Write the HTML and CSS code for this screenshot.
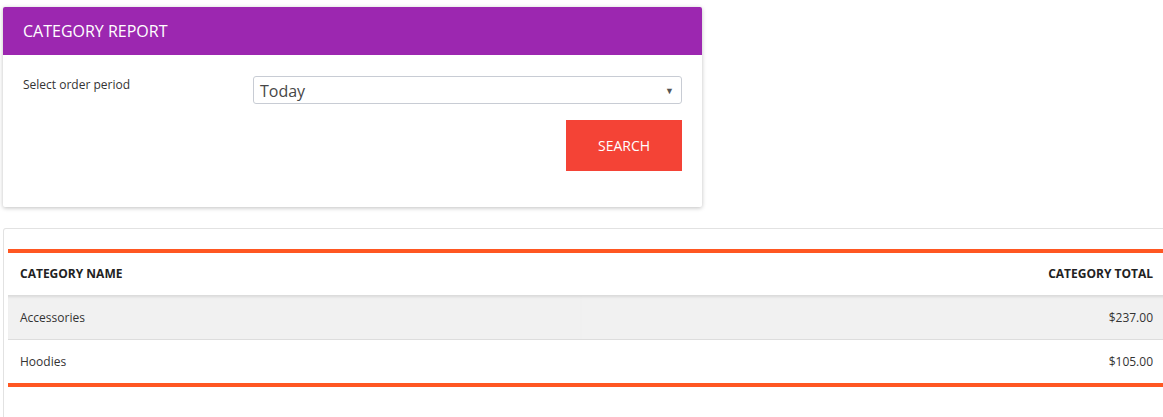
FILE: index.html
```html
<!DOCTYPE html>
<html>
<head>
<meta charset="utf-8">
<link rel="stylesheet" href="styles.css">
</head>
<body>
<div class="page">
  <section class="card report">
    <header class="card-header">CATEGORY REPORT</header>
    <div class="card-body">
      <div class="form-row">
        <label class="form-label">Select order period</label>
        <div class="select">
          <span class="select-value">Today</span>
          <span class="select-arrow">▼</span>
        </div>
      </div>
      <div class="actions">
        <button class="btn-search">SEARCH</button>
      </div>
    </div>
  </section>

  <section class="card results">
    <table class="report-table">
      <thead>
        <tr><th class="col-name">CATEGORY NAME</th><th class="col-total">CATEGORY TOTAL</th></tr>
      </thead>
      <tbody>
        <tr class="row-alt"><td class="col-name">Accessories</td><td class="col-total">$237.00</td></tr>
        <tr><td class="col-name">Hoodies</td><td class="col-total">$105.00</td></tr>
      </tbody>
    </table>
  </section>
</div>
</body>
</html>
```
FILE: styles.css
```css
html, body {
  margin: 0;
  padding: 0;
  background: #ffffff;
  overflow: hidden;
}
body {
  font-family: "Open Sans", "Noto Sans", sans-serif;
  color: #222;
}
.page {
  padding: 7px 0 0 3px;
  width: 1163px;
}
.card {
  background: #fff;
}
.report {
  width: 699px;
  border-radius: 2px;
  box-shadow: 0 1px 4px rgba(0,0,0,0.25);
  overflow: hidden;
}
.card-header {
  background: #9c27b0;
  color: #fff;
  height: 48px;
  line-height: 48px;
  padding-left: 20px;
  font-size: 16px;
  font-weight: 400;
}
.card-body {
  padding: 21px 20px 36px 20px;
}
.form-row {
  display: grid;
  grid-template-columns: 230px 1fr;
  align-items: start;
}
.form-label {
  font-size: 12px;
  color: #333;
  padding-top: 1px;
  line-height: 16px;
}
.select {
  height: 28px;
  box-sizing: border-box;
  border: 1px solid #c8ccd4;
  border-radius: 3px;
  display: flex;
  align-items: center;
  justify-content: space-between;
  padding: 0 7px 0 6px;
}
.select-value {
  font-size: 16px;
  color: #474747;
  padding-top: 2px;
}
.select-arrow {
  font-size: 9px;
  color: #555;
}
.actions {
  display: flex;
  justify-content: flex-end;
  margin-top: 16px;
}
.btn-search {
  width: 116px;
  height: 51px;
  border: none;
  background: #f44336;
  color: #fff;
  font-family: inherit;
  font-size: 14px;
  padding: 0;
}
.results {
  margin-top: 21px;
  border: 1px solid #e2e2e2;
  border-bottom: none;
  border-radius: 3px 3px 0 0;
  padding: 20px 0 31px 4px;
}
.report-table {
  width: 100%;
  border-collapse: collapse;
  border-top: 4px solid #ff5722;
  border-bottom: 4px solid #ff5722;
  font-size: 12px;
}
.report-table th {
  height: 40px;
  padding: 0 12px 2px 12px;
  font-weight: 700;
  color: #222;
  vertical-align: middle;
}
.report-table td {
  height: 43px;
  padding: 0 12px;
  color: #333;
}
.report-table tbody tr:first-child td {
  height: 44px;
  box-shadow: inset 0 4px 3px -2px rgba(0,0,0,0.1);
}
.report-table tbody tr + tr td {
  border-top: 1px solid #dddddd;
}
.row-alt td {
  background: #f1f1f1;
}
.col-name {
  text-align: left;
}
.col-total {
  text-align: right;
}
```
